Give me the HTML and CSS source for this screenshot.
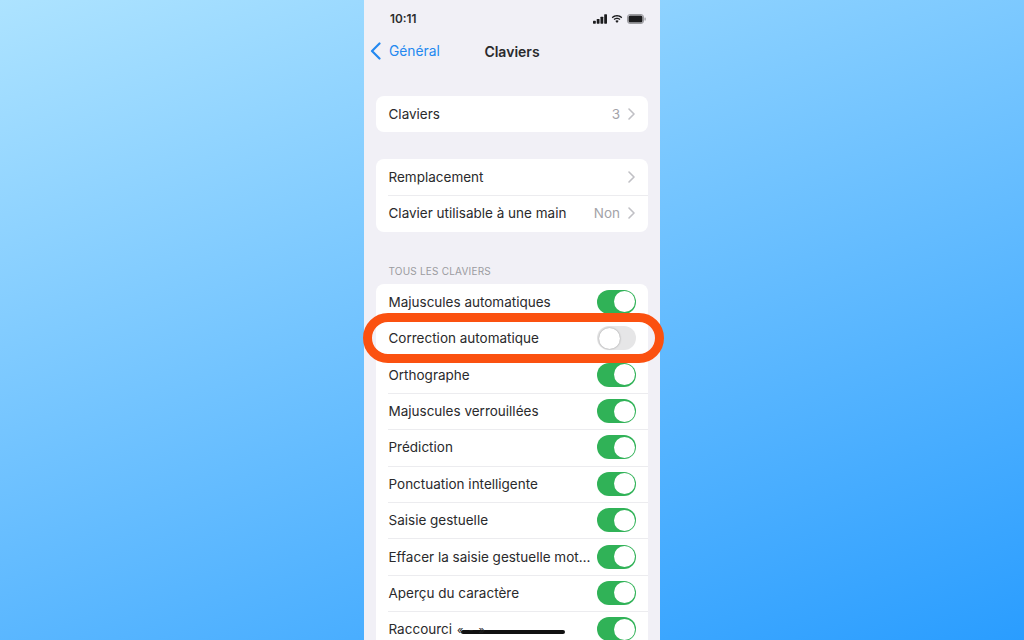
FILE: index.html
```html
<!DOCTYPE html>
<html lang="fr">
<head>
    <meta charset="UTF-8">
    <title>Claviers</title>
    <link rel="stylesheet" href="styles.css">
</head>
<body>
    <div class="phone">
        <div class="status">
            <span class="time">10:11</span>
            <div class="status-icons">
                <svg width="14" height="10" viewBox="0 0 15 10"><rect x="0" y="7" width="3" height="3" rx=".6"/><rect x="4" y="5" width="3" height="5" rx=".6"/><rect x="8" y="2.500" width="3" height="7.500" rx=".6"/><rect x="12" y="0" width="3" height="10" rx=".6"/></svg>
                <svg width="12" height="10" viewBox="0 0 14 10"><path d="M7 2c2 0 3.800.8 5.100 2l1-1.100C11.500 1.300 9.400.4 7 .4S2.500 1.300.9 2.900l1 1.100C3.200 2.800 5 2 7 2z"/><path d="M7 5c1.200 0 2.200.4 3 1.200l1-1.100C10 4 8.600 3.400 7 3.400S4 4 3 5.100l1 1.100C4.800 5.400 5.800 5 7 5z"/><path d="M7 6.400c-.8 0-1.400.3-1.900.8L7 9.600l1.900-2.400c-.5-.5-1.100-.8-1.900-.8z"/></svg>
                <svg width="19" height="10" viewBox="0 0 19 10"><rect x=".5" y=".5" width="16" height="9" rx="2.500" fill="none" stroke="#1c1c1e" stroke-opacity=".4"/><rect x="1.500" y="1.500" width="14" height="7" rx="1.500"/><rect x="17.500" y="3.500" width="1.200" height="3" rx=".6" fill-opacity=".4"/></svg>
            </div>
        </div>

        <div class="navbar">
            <div class="back">
                <svg width="11" height="18" viewBox="0 0 11 18"><path d="M9.500 1.500 2 9l7.500 7.500" fill="none" stroke="#2388f0" stroke-width="2.200" stroke-linecap="round" stroke-linejoin="round"/></svg>
                <span>Général</span>
            </div>
            <div class="nav-title">Claviers</div>
        </div>

        <div class="card card-first">
            <div class="row">
                <span class="label">Claviers</span>
                <span class="value">3</span>
                <svg class="chev" width="7" height="12" viewBox="0 0 7 12"><path d="M1 1l5 5-5 5" fill="none" stroke="#c0c0c5" stroke-width="1.600" stroke-linecap="round" stroke-linejoin="round"/></svg>
            </div>
        </div>

        <div class="card card-second">
            <div class="row">
                <span class="label">Remplacement</span>
                <svg class="chev" width="7" height="12" viewBox="0 0 7 12"><path d="M1 1l5 5-5 5" fill="none" stroke="#c0c0c5" stroke-width="1.600" stroke-linecap="round" stroke-linejoin="round"/></svg>
            </div>
            <div class="row">
                <span class="label">Clavier utilisable à une main</span>
                <span class="value">Non</span>
                <svg class="chev" width="7" height="12" viewBox="0 0 7 12"><path d="M1 1l5 5-5 5" fill="none" stroke="#c0c0c5" stroke-width="1.600" stroke-linecap="round" stroke-linejoin="round"/></svg>
            </div>
        </div>

        <div class="section-title">TOUS LES CLAVIERS</div>

        <div class="card">
            <div class="row"><span class="label">Majuscules automatiques</span><span class="toggle on"></span></div>
            <div class="row"><span class="label">Correction automatique</span><span class="toggle"></span></div>
            <div class="row"><span class="label">Orthographe</span><span class="toggle on"></span></div>
            <div class="row"><span class="label">Majuscules verrouillées</span><span class="toggle on"></span></div>
            <div class="row"><span class="label">Prédiction</span><span class="toggle on"></span></div>
            <div class="row"><span class="label">Ponctuation intelligente</span><span class="toggle on"></span></div>
            <div class="row"><span class="label">Saisie gestuelle</span><span class="toggle on"></span></div>
            <div class="row"><span class="label">Effacer la saisie gestuelle mot…</span><span class="toggle on"></span></div>
            <div class="row"><span class="label">Aperçu du caractère</span><span class="toggle on"></span></div>
            <div class="row"><span class="label">Raccourci</span><span class="toggle on"></span></div>
        </div>

        <!-- red outline over the autocorrect row -->
        <div class="highlight"></div>

        <div class="home-bar"><span class="arrows">«-»</span></div>
    </div>
</body>
</html>
```

FILE: styles.css
```css
* {
    box-sizing: border-box;
}

html, body {
    height: 100%;
}

body {
    margin: 0;
    overflow: hidden;
    display: flex;
    justify-content: center;
    font-family: Inter, "Noto Sans", sans-serif;
    color: #2a2a2c;
    background: linear-gradient(160deg, #ade3ff 0%, #2a9dff 100%);
}

.phone {
    position: relative;
    width: 296px;
    height: 640px;
    padding: 0 12px;
    background-color: #f1f0f6;
}

/* Status bar */
.status {
    display: flex;
    justify-content: space-between;
    align-items: center;
    height: 37px;
    padding: 0 2px 0 14px;
}

.time {
    font-size: 11.800px;
    font-weight: 600;
    color: #2c2c2e;
}

.status-icons {
    display: flex;
    align-items: center;
    gap: 4px;
}

.status-icons svg {
    fill: #1c1c1e;
}

/* Nav */
.navbar {
    position: relative;
    display: flex;
    align-items: center;
    justify-content: center;
    height: 28px;
}

.back {
    position: absolute;
    left: -6px;
    top: 0;
    height: 100%;
    display: flex;
    align-items: center;
    gap: 8px;
    font-size: 13.800px;
    color: #2388f0;
}

.nav-title {
    font-size: 14px;
    font-weight: 600;
}

/* Groups */
.card {
    background-color: #fff;
    border-radius: 8px;
    width: 272px;
}

.card-first {
    margin-top: 31px;
}

.card-second {
    margin-top: 26.500px;
}

.row {
    display: flex;
    align-items: center;
    height: 36.400px;
    padding-left: 12.500px;
    padding-right: 12px;
    position: relative;
}

.row + .row::before {
    content: "";
    position: absolute;
    top: 0;
    left: 12px;
    right: 0;
    height: 1px;
    background-color: #ececef;
}

.label {
    flex: 1;
    font-size: 13.500px;
    white-space: nowrap;
}

.value {
    font-size: 13.500px;
    color: #a3a3a8;
    margin-right: 8px;
}

.chev {
    margin-right: 1px;
}

.section-title {
    margin: 33.200px 0 0 12.500px;
    height: 18.800px;
    font-size: 10px;
    letter-spacing: .2px;
    color: #9b9ba0;
}

/* Switches */
.toggle {
    position: relative;
    width: 39px;
    height: 24px;
    border-radius: 12px;
    background-color: #e6e6e7;
    flex-shrink: 0;
}

.toggle::after {
    content: "";
    position: absolute;
    top: 1.500px;
    left: 1.500px;
    width: 21px;
    height: 21px;
    border-radius: 50%;
    background-color: #fff;
    box-shadow: 0 0 2px rgba(0, 0, 0, .4);
}

.toggle.on {
    background-color: #30b257;
}

.toggle.on::after {
    left: auto;
    right: 1.500px;
    box-shadow: none;
}

/* Overlays */
.highlight {
    position: absolute;
    left: -1px;
    top: 313px;
    width: 301px;
    height: 50px;
    border: 9px solid #fb5110;
    border-radius: 25px;
}

.home-bar {
    position: absolute;
    left: 97px;
    top: 630px;
    width: 104px;
    height: 4px;
    border-radius: 2px;
    background-color: #111;
}

.arrows {
    position: absolute;
    left: -4px;
    top: -6px;
    font-size: 11px;
    line-height: 12px;
    letter-spacing: 5px;
    color: #222;
}
```
